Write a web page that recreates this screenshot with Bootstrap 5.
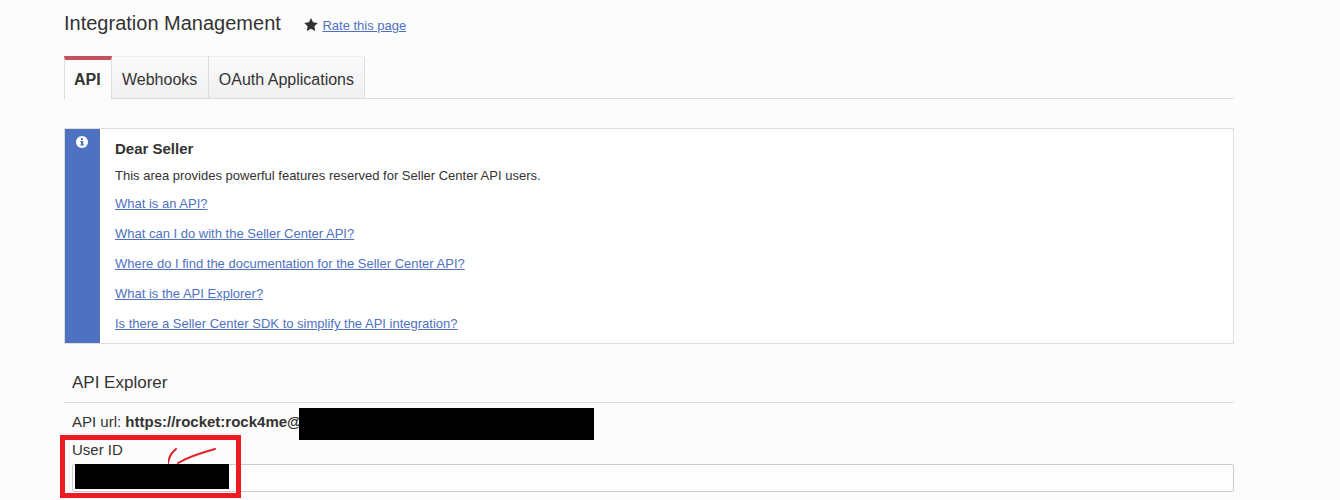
<!DOCTYPE html>
<html lang="en">
<head>
<meta charset="utf-8">
<title>Integration Management</title>
<link href="https://cdn.jsdelivr.net/npm/bootstrap@5.3.0/dist/css/bootstrap.min.css" rel="stylesheet">
<style>
html,body{height:500px;overflow:hidden}
body{background:#fcfcfc;font-family:"Liberation Sans",Arial,sans-serif;color:#333;font-size:14px}
a{color:#4f72c0}
.page-wrap{width:1170px;margin-left:64px}
.head-row{height:56px;padding-top:11px;align-items:flex-start}
.page-title{font-size:20px;font-weight:400;line-height:24px;margin:0;color:#333}
.rate-box{margin-left:23px;margin-top:6px;font-size:13px;line-height:17px}
.rate-box svg{margin-right:1px;vertical-align:-1px}
.tab-bar{border-bottom:1px solid #ddd;height:43px}
.tab-item{display:block;height:42px;padding:11px 10px 0;font-size:16px;line-height:24px;color:#333;text-decoration:none;background:linear-gradient(#fafafa,#f0f0f0);border-right:1px solid #ddd;border-top:1px solid #eee}
.tab-wide{padding-right:10.5px}
.tab-on{height:43px;background:#fcfcfc;font-weight:700;border-top:4px solid #c4505c;border-left:1px solid #ddd;padding-top:8px;padding-left:9px;border-right:1px solid #ddd;width:48px}
.notice-box{margin-top:29px;height:216px;border:1px solid #ddd;background:#fff}
.notice-side{width:35px;background:#4f72c0;padding-top:7px;flex:none}
.notice-side svg{display:block;margin:0 0 0 11px}
.notice-body{padding:10px 15px 0;font-size:13px;line-height:17px}
.notice-title{font-size:15px;font-weight:700;line-height:20px;margin:0 0 8px}
.notice-text{margin:0 0 11px}
.notice-link{display:block;margin-bottom:13px}
.section-title{font-size:17px;font-weight:400;line-height:22px;padding:28px 8px 8px;margin:0;border-bottom:1px solid #ddd;color:#333}
.url-row{padding-left:8px;height:37px;align-items:flex-start;padding-top:5px;line-height:28px;font-size:15px}
.url-row b{font-weight:700}
.redact{background:#000;display:block}
.redact-url{width:295px;height:32px;margin-left:-3px}
.field-area{position:relative;padding-left:8px}
.field-label{display:block;font-size:15px;line-height:20px;margin:0 0 4px;color:#333}
.field-input{display:block;height:28px;width:100%;border:1px solid #ccc;border-radius:2px;background:#fdfdfd}
.over-box{position:absolute;left:-4px;top:-5px;width:181px;height:63px;border:5px solid #ed1c24}
.over-redact{position:absolute;left:11px;top:24px;width:154px;height:25px}
.over-ink{position:absolute;left:104px;top:8px}
</style>
</head>
<body>
<div class="page-wrap">
  <div class="d-flex head-row">
    <h1 class="page-title">Integration Management</h1>
    <div class="rate-box">
      <svg width="14" height="13" viewBox="0 0 24 23"><path fill="#333" d="M12 0l3.7 7.6 8.3 1.2-6 5.9 1.4 8.3L12 19.1 4.6 23 6 14.7 0 8.8l8.3-1.2z"/></svg>
      <a href="#">Rate this page</a>
    </div>
  </div>
  <div class="tab-bar d-flex">
    <a class="tab-item tab-on" href="#">API</a>
    <a class="tab-item tab-wide" href="#">Webhooks</a>
    <a class="tab-item" href="#">OAuth Applications</a>
  </div>
  <div class="notice-box d-flex">
    <div class="notice-side">
      <svg width="12" height="12" viewBox="0 0 12 12"><circle cx="6" cy="6" r="6" fill="#fff"/><rect x="5" y="2.2" width="2" height="1.8" fill="#4f72c0"/><path fill="#4f72c0" d="M4.4 5h2.8v3.6h.8v1H4.2v-1H5V6h-.6z"/></svg>
    </div>
    <div class="notice-body">
      <h2 class="notice-title">Dear Seller</h2>
      <p class="notice-text">This area provides powerful features reserved for Seller Center API users.</p>
      <a class="notice-link" href="#">What is an API?</a>
      <a class="notice-link" href="#">What can I do with the Seller Center API?</a>
      <a class="notice-link" href="#">Where do I find the documentation for the Seller Center API?</a>
      <a class="notice-link" href="#">What is the API Explorer?</a>
      <a class="notice-link" href="#">Is there a Seller Center SDK to simplify the API integration?</a>
    </div>
  </div>
  <h2 class="section-title">API Explorer</h2>
  <div class="url-row d-flex">
    <span>API url:&nbsp;<b>https://rocket:rock4me@</b></span>
    <span class="redact redact-url"></span>
  </div>
  <div class="field-area">
    <label class="field-label" for="uid">User ID</label>
    <input class="field-input" id="uid" type="text">
    <div class="over-box"></div>
    <span class="redact over-redact"></span>
    <svg class="over-ink" width="50" height="17" viewBox="0 0 50 17"><path fill="none" stroke="#e0202a" stroke-width="2" stroke-linecap="round" d="M8 1C4 4 1 9 0 15M47 1C36 4 22 8 10 15"/></svg>
  </div>
</div>
<script src="https://cdn.jsdelivr.net/npm/bootstrap@5.3.0/dist/js/bootstrap.bundle.min.js"></script>
</body>
</html>
